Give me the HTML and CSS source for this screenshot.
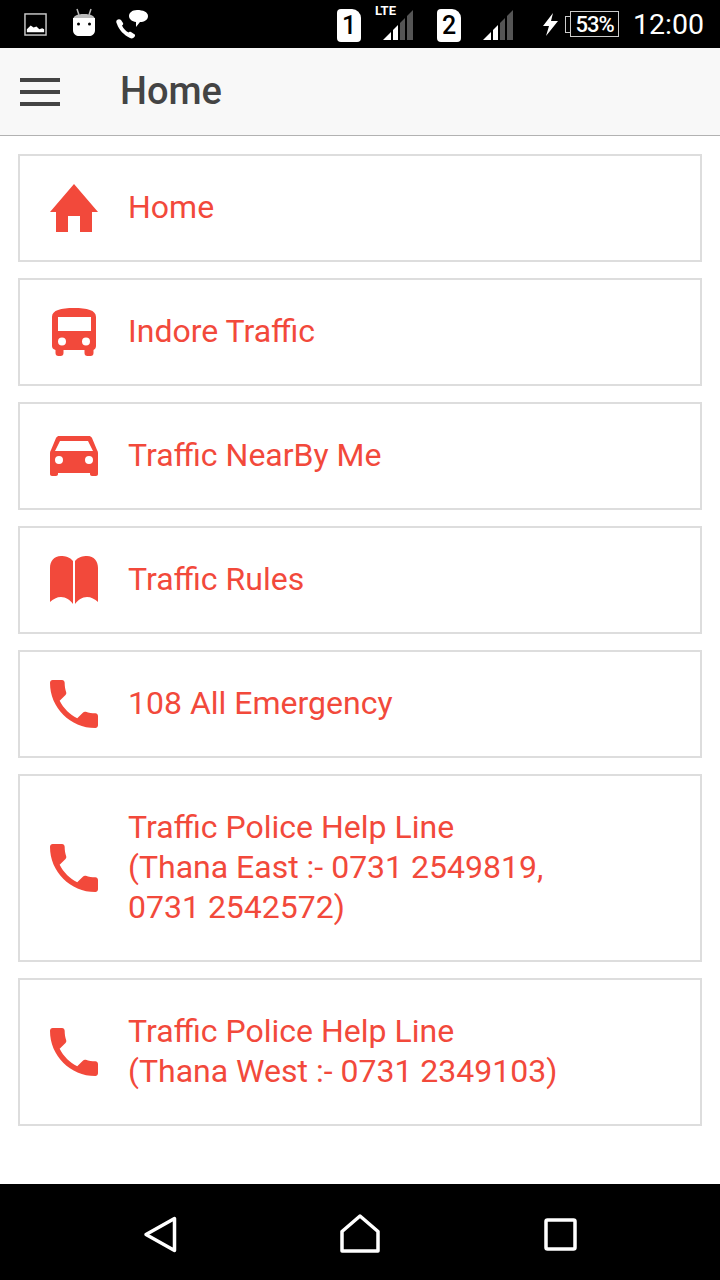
FILE: index.html
```html
<!DOCTYPE html>
<html>
  <head>
    <title>Home</title>
    <link rel="stylesheet" href="styles.css">
  </head>
  <body>
    <div class="status-bar">
      <div class="status-left">
        <svg class="st-image" viewBox="0 0 24 24"><rect x="1" y="1" width="22" height="22" fill="none" stroke="#ccc" stroke-width="1.5"/><path d="M3 20v-3l4-4 3 2 3-1 3 3 3-1 2 1v3z" fill="#fff"/></svg>
        <svg class="st-android" viewBox="0 0 24 28"><path d="M5 1l2 6M19 1l-2 6" stroke="#bbb" stroke-width="1.5"/><path d="M1 12c0-4 4-6 11-6s11 2 11 6z" fill="#bbb"/><path d="M1 10h22v12c0 4-3 6-6 6H7c-3 0-6-2-6-6z" fill="#fff"/><circle cx="6.500" cy="16" r="1.500"/><circle cx="17.500" cy="16" r="1.500"/></svg>
        <svg class="st-call" viewBox="0 0 32 29"><path d="M1 10c-1 1-1 2 0 4 2 6 7 11 13 14 2 1 4 0 5-2 0-1 0-2-1-2l-3-2c-1-.5-2-.5-2.500.5-3-1.500-5-4-6.500-7 1-.5 1.500-1.500 1-2.500L5 10c-1-1-3-1-4 0z" fill="#fff"/><path d="M21 0c6 0 11 2 11 6s-4 6-8 6l-4 5 0-5c-4-.5-7-3-7-6s3-6 8-6z" fill="#fff"/></svg>
      </div>
      <div class="status-right">
        <div class="sim">1</div>
        <div class="signal signal-lte">
          <span class="lte">LTE</span>
          <svg class="st-signal" viewBox="0 0 30 30"><path d="M0 30L8 22V30z" fill="#fff"/><path d="M10 20L15 15V30H10z" fill="#fff"/><path d="M17 13l5-5v22h-5z" fill="#555"/><path d="M24 6l6-6v30h-6z" fill="#555"/></svg>
        </div>
        <div class="sim sim-two">2</div>
        <div class="signal signal-plain">
          <svg class="st-signal" viewBox="0 0 30 30"><path d="M0 30L8 22V30z" fill="#fff"/><path d="M10 20L15 15V30H10z" fill="#fff"/><path d="M17 13l5-5v22h-5z" fill="#555"/><path d="M24 6l6-6v30h-6z" fill="#555"/></svg>
        </div>
        <svg class="st-bolt" viewBox="0 0 15 23"><path d="M10 0L0 13h6L3 23l12-15H8z" fill="#fff"/></svg>
        <div class="battery"><span class="battery-cap"></span><span class="battery-body">53%</span></div>
        <span class="clock">12:00</span>
      </div>
    </div>

    <div class="app-header">
      <div class="hamburger"><span></span><span></span><span></span></div>
      <h1>Home</h1>
    </div>

    <div class="menu">
      <div class="menu-item">
        <svg class="icon" viewBox="0 0 48 48"><path d="M24 0L48 28H42V48H30V32H18V48H6V28H0z"/></svg>
        <div class="label">Home</div>
      </div>
      <div class="menu-item">
        <svg class="icon" viewBox="0 0 48 48"><path fill-rule="evenodd" d="M2 9C2 2 11 0 24 0s22 2 22 9v29c0 2-1 3-2.500 4v3c0 2-1 3-3 3h-3c-2 0-3-1-3-3v-3H13.500v3c0 2-1 3-3 3h-2c-2 0-3-1-3-3v-3C3 41 2 40 2 38zM8 9v14h33V9zM12 29.500a4 4 0 1 0 0 8 4 4 0 0 0 0-8zM36 29.500a4 4 0 1 0 0 8 4 4 0 0 0 0-8z"/></svg>
        <div class="label">Indore Traffic</div>
      </div>
      <div class="menu-item">
        <svg class="icon" viewBox="0 0 48 48"><path fill-rule="evenodd" d="M6 6C7 4.500 8 4 9 4h30c1 0 2 .5 3 2l5 12c.7 1 1 2 1 3v21c0 1.200-.8 2-2 2h-4c-1.200 0-2-.8-2-2v-1H8v1c0 1.200-.8 2-2 2H2c-1.200 0-2-.8-2-2V21c0-1 .3-2 1-3zM10 9L5 19h38L38 9zM9 24a4 4 0 1 0 0 8 4 4 0 0 0 0-8zM39 24a4 4 0 1 0 0 8 4 4 0 0 0 0-8z"/></svg>
        <div class="label">Traffic NearBy Me</div>
      </div>
      <div class="menu-item">
        <svg class="icon" viewBox="0 0 48 48"><path d="M23 5C20 1 15 0 11 0 4 0 0 5 0 12V46C3 43 7 41 11 41c5 0 9 3 12 7z"/><path d="M25 5C28 1 33 0 37 0c7 0 11 5 11 12V46C45 43 41 41 37 41c-5 0-9 3-12 7z"/></svg>
        <div class="label">Traffic Rules</div>
      </div>
      <div class="menu-item">
        <svg class="icon" viewBox="3 3 18 18"><path d="M6.620 10.790c1.440 2.830 3.760 5.140 6.590 6.590l2.200-2.200c.27-.27.67-.36 1.020-.24 1.120.37 2.330.57 3.570.57.55 0 1 .45 1 1V20c0 .55-.45 1-1 1-9.390 0-17-7.610-17-17 0-.55.45-1 1-1h3.500c.55 0 1 .45 1 1 0 1.250.2 2.450.57 3.570.11.35.03.74-.25 1.020l-2.200 2.200z"/></svg>
        <div class="label">108 All Emergency</div>
      </div>
      <div class="menu-item">
        <svg class="icon" viewBox="3 3 18 18"><path d="M6.620 10.790c1.440 2.830 3.760 5.140 6.590 6.590l2.200-2.200c.27-.27.67-.36 1.020-.24 1.120.37 2.330.57 3.570.57.55 0 1 .45 1 1V20c0 .55-.45 1-1 1-9.390 0-17-7.610-17-17 0-.55.45-1 1-1h3.500c.55 0 1 .45 1 1 0 1.250.2 2.450.57 3.570.11.35.03.74-.25 1.020l-2.200 2.200z"/></svg>
        <div class="label">Traffic Police Help Line<br>(Thana East :- 0731 2549819,<br>0731 2542572)</div>
      </div>
      <div class="menu-item">
        <svg class="icon" viewBox="3 3 18 18"><path d="M6.620 10.790c1.440 2.830 3.760 5.140 6.590 6.590l2.200-2.200c.27-.27.67-.36 1.020-.24 1.120.37 2.330.57 3.570.57.55 0 1 .45 1 1V20c0 .55-.45 1-1 1-9.390 0-17-7.610-17-17 0-.55.45-1 1-1h3.500c.55 0 1 .45 1 1 0 1.250.2 2.450.57 3.570.11.35.03.74-.25 1.020l-2.200 2.200z"/></svg>
        <div class="label">Traffic Police Help Line<br>(Thana West :- 0731 2349103)</div>
      </div>
    </div>

    <div class="nav-bar">
      <div class="nav-slot">
        <svg class="nav-back" viewBox="0 0 34 37"><path d="M31.500 2.500V34.500L3 18.500z" fill="none" stroke="#fff" stroke-width="3.500" stroke-linejoin="round"/></svg>
      </div>
      <div class="nav-slot">
        <svg class="nav-home" viewBox="0 0 40 39"><path d="M20 2L38 17.500V37H2V17.500z" fill="none" stroke="#fff" stroke-width="3.500" stroke-linejoin="round"/></svg>
      </div>
      <div class="nav-slot">
        <svg class="nav-square" viewBox="0 0 33 33"><rect x="2" y="2" width="29" height="29" rx="1.500" fill="none" stroke="#fff" stroke-width="3.500"/></svg>
      </div>
    </div>
  </body>
</html>
```

FILE: styles.css
```css
html,
body {
  height: 100%;
}

body {
  margin: 0;
  height: 1280px;
  display: flex;
  flex-direction: column;
  background-color: #fff;
  font-family: Roboto, "Liberation Sans", sans-serif;
  overflow: hidden;
}

/* Status bar */
.status-bar {
  height: 48px;
  flex: none;
  display: flex;
  justify-content: space-between;
  align-items: center;
  padding: 0 16px 0 24px;
  background-color: #000;
  color: #fff;
}

.status-left,
.status-right {
  display: flex;
  align-items: center;
}

.st-image {
  width: 23px;
  height: 23px;
  margin-top: 1px;
}

.st-android {
  width: 24px;
  height: 28px;
  margin-left: 25px;
  margin-top: -4px;
}

.st-call {
  width: 32px;
  height: 29px;
  margin-left: 20px;
}

.sim {
  width: 24px;
  height: 33px;
  margin-top: 2px;
  display: flex;
  justify-content: center;
  align-items: center;
  background-color: #fff;
  color: #000;
  border-radius: 4px 9px 4px 4px;
  font-size: 25px;
  font-weight: 500;
}

.signal {
  position: relative;
  width: 30px;
  height: 30px;
  margin-top: 2px;
}

.signal-lte {
  margin-left: 22px;
}

.sim-two {
  margin-left: 24px;
}

.signal-plain {
  margin-left: 22px;
}

.lte {
  position: absolute;
  top: -7px;
  left: -8px;
  font-size: 13px;
  font-weight: 700;
}

.st-signal {
  display: block;
  width: 30px;
  height: 30px;
}

.st-bolt {
  width: 15px;
  height: 23px;
  margin-left: 30px;
  margin-top: 1px;
}

.battery {
  display: flex;
  align-items: center;
  margin-left: 7px;
}

.battery-cap {
  width: 4px;
  height: 15px;
  border: 1px solid #ccc;
  border-right: none;
}

.battery-body {
  width: 47px;
  height: 24px;
  display: flex;
  justify-content: center;
  align-items: center;
  border: 1px solid #ccc;
  font-size: 22px;
  font-weight: 500;
  letter-spacing: -1px;
}

.clock {
  margin-left: 14px;
  font-size: 28.500px;
}

/* Header */
.app-header {
  height: 87px;
  flex: none;
  display: flex;
  align-items: center;
  padding-left: 20px;
  background-color: #f8f8f8;
  border-bottom: 1px solid #b2b2b2;
}

.hamburger {
  width: 40px;
  display: flex;
  flex-direction: column;
  gap: 8px;
}

.hamburger span {
  height: 4px;
  background-color: #444;
}

h1 {
  margin: 0 0 2px 60px;
  color: #444;
  font-size: 38px;
  font-weight: 500;
}

/* Menu */
.menu {
  flex: 1;
  display: flex;
  flex-direction: column;
  gap: 16px;
  padding: 18px 18px 0;
}

.menu-item {
  display: flex;
  align-items: center;
  gap: 30px;
  padding: 28px 30px;
  border: 2px solid #ddd;
}

.icon {
  width: 48px;
  height: 48px;
  flex: none;
  fill: #f2493b;
}

.label {
  padding: 3px 0 5px;
  color: #f2493b;
  font-size: 32px;
  line-height: 40px;
}

/* Bottom nav */
.nav-bar {
  height: 96px;
  flex: none;
  display: flex;
  justify-content: center;
  align-items: center;
  background-color: #000;
}

.nav-slot {
  width: 200px;
  display: flex;
  justify-content: center;
}

.nav-back {
  width: 34px;
  height: 37px;
  margin-top: 4px;
}

.nav-home {
  width: 40px;
  height: 39px;
  margin-top: 2px;
}

.nav-square {
  width: 33px;
  height: 33px;
  margin-top: 4px;
}
```
